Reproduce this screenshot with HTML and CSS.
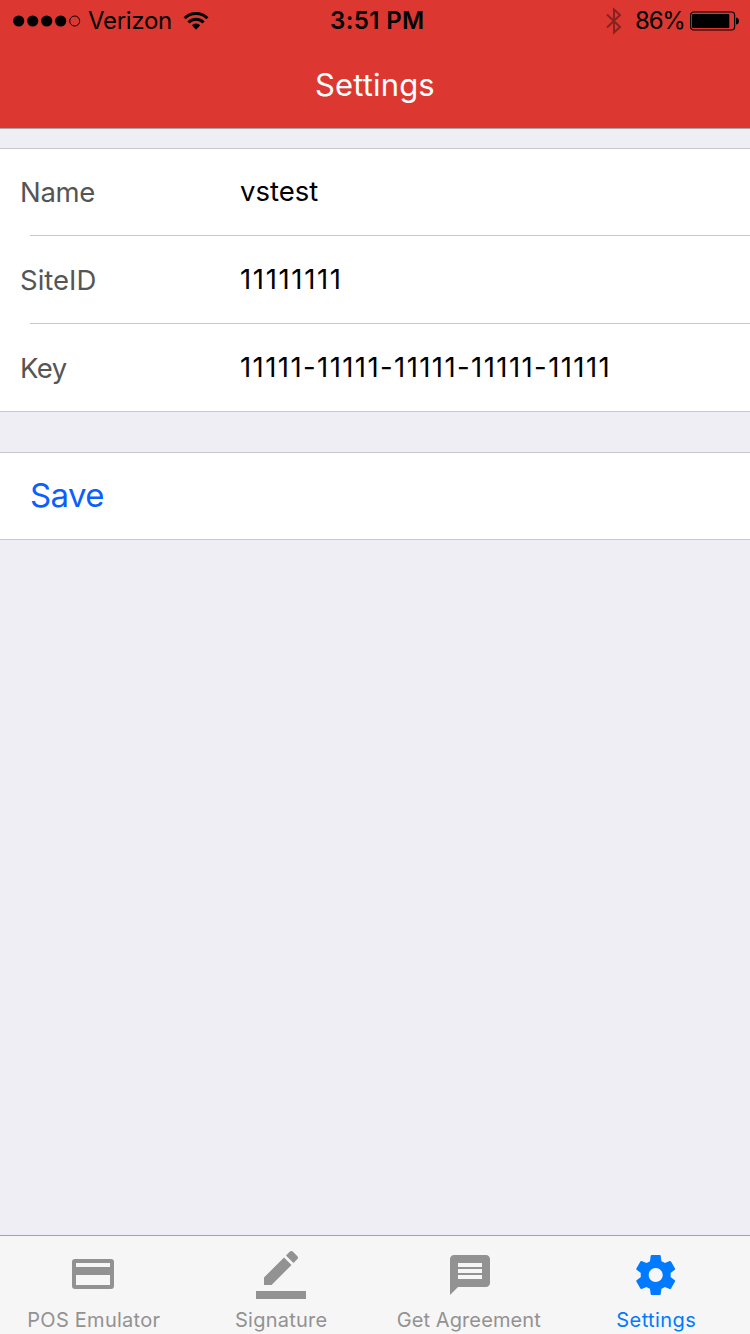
FILE: index.html
```html
<!DOCTYPE html>
<html lang="en">
<head>
<meta charset="utf-8">
<title>Settings</title>
<link rel="stylesheet" href="styles.css">
</head>
<body>
<div class="screen">
  <header class="header">
    <div class="status">
      <div class="status-left">
        <svg class="signal" width="68" height="12" viewBox="0 0 68 12"><circle cx="5.7" cy="6" r="5.6"/><circle cx="19.7" cy="6" r="5.6"/><circle cx="33.7" cy="6" r="5.6"/><circle cx="47.7" cy="6" r="5.6"/><circle cx="61.7" cy="6" r="5" fill="none" stroke="#000"/></svg>
        <span class="carrier">Verizon</span>
        <svg class="wifi" width="26" height="20" viewBox="0 0 26 20"><g fill="none" stroke="#000" stroke-width="2.9"><path d="M1.5 7.3a16.3 16.3 0 0 1 23 0"/><path d="M5.4 11.4a10.7 10.7 0 0 1 15.2 0"/></g><path d="M8.7 14.3a6.1 6.1 0 0 1 8.6 0L13 18.7z"/></svg>
      </div>
      <span class="time">3:51 PM</span>
      <div class="status-right">
        <svg class="bluetooth" width="16" height="28" viewBox="0 0 16 28"><path d="M1 7.5L14 20 8 25.5V2.5L14 8 1 20.5" fill="none" stroke="#87221f" stroke-width="2"/></svg>
        <span class="percent">86%</span>
        <svg class="battery" width="50" height="20" viewBox="0 0 50 20"><rect x=".6" y="1" width="44" height="18" rx="3" fill="none" stroke="#000" stroke-width="1.2"/><rect x="2" y="3" width="37.3" height="14" rx="1"/><path d="M46 6.4q3 .6 3 3.6t-3 3.6z"/></svg>
      </div>
    </div>
    <h1 class="title">Settings</h1>
  </header>
  <main class="content">
    <section class="group">
      <label class="row"><span class="label name">Name</span><span class="value">vstest</span></label>
      <label class="row"><span class="label">SiteID</span><span class="value site-id">11111111</span></label>
      <label class="row"><span class="label key">Key</span><span class="value site-key">11111-11111-11111-11111-11111</span></label>
    </section>
    <section class="group action"><span class="save">Save</span></section>
  </main>
  <nav class="tabs">
    <a class="tab">
      <svg class="icon" width="50" height="48" viewBox="1 0 50 48"><path fill-rule="evenodd" d="M7 8h36a3 3 0 0 1 3 3v24a3 3 0 0 1-3 3H7a3 3 0 0 1-3-3V11a3 3 0 0 1 3-3zM8 12v4h34v-4zM8 24v10h34V24z"/></svg>
      <span class="tab-label pos">POS Emulator</span>
    </a>
    <a class="tab">
      <svg class="icon" width="50" height="48" viewBox="0 0 25 24"><path d="M17.75 7L14 3.25l-10 10V17h3.75l10-10zm2.96-2.96c.39-.39.39-1.02 0-1.41L18.37.29c-.39-.39-1.02-.39-1.41 0L15 2.25 18.75 6l1.96-1.96zM0 20h25v4H0z"/></svg>
      <span class="tab-label">Signature</span>
    </a>
    <a class="tab">
      <svg class="icon" width="48" height="48" viewBox="-.5 0 24 24"><path d="M20 2H4c-1.1 0-1.99.9-1.99 2L2 22l4-4h14c1.1 0 2-.9 2-2V4c0-1.1-.9-2-2-2zm-2 12H6v-2h12v2zm0-3H6V9h12v2zm0-3H6V6h12v2z"/></svg>
      <span class="tab-label agreement">Get Agreement</span>
    </a>
    <a class="tab active">
      <svg class="icon" width="48" height="48" viewBox=".15 0 24 24"><path d="M19.43 12.98c.04-.32.07-.64.07-.98s-.03-.66-.07-.98l2.11-1.65c.19-.15.24-.42.12-.64l-2-3.46c-.12-.22-.39-.3-.61-.22l-2.49 1c-.52-.4-1.08-.73-1.69-.98l-.38-2.65C14.46 2.18 14.25 2 14 2h-4c-.25 0-.46.18-.49.42l-.38 2.65c-.61.25-1.17.59-1.69.98l-2.49-1c-.23-.09-.49 0-.61.22l-2 3.46c-.13.22-.07.49.12.64l2.11 1.65c-.04.32-.07.65-.07.98s.03.66.07.98l-2.11 1.65c-.19.15-.24.42-.12.64l2 3.46c.12.22.39.3.61.22l2.49-1c.52.4 1.08.73 1.69.98l.38 2.65c.03.24.24.42.49.42h4c.25 0 .46-.18.49-.42l.38-2.65c.61-.25 1.17-.59 1.69-.98l2.49 1c.23.09.49 0 .61-.22l2-3.46c.12-.22.07-.49-.12-.64l-2.11-1.65zM12 15.5c-1.93 0-3.5-1.57-3.5-3.5s1.57-3.5 3.5-3.5 3.5 1.57 3.5 3.5-1.57 3.5-3.5 3.5z"/></svg>
      <span class="tab-label settings">Settings</span>
    </a>
  </nav>
</div>
</body>
</html>
```
FILE: styles.css
```css
* { box-sizing: border-box; }
body { margin: 0; font-family: Inter, "Liberation Sans", sans-serif; }
.screen { width: 750px; height: 1334px; display: flex; flex-direction: column; background: #efeef4; white-space: nowrap; }
.header { height: 129px; background: #dc3831; border-bottom: 1px solid #a9a4a8; }
.status { height: 40px; display: grid; grid-template-columns: 300px 1fr 300px; align-items: center; font-size: 24px; line-height: 42px; color: #000; }
.status-left, .status-right { display: flex; align-items: center; height: 40px; }
.status-left { padding-left: 13px; }
.signal { margin-right: 7px; }
.carrier { width: 85px; letter-spacing: -.3px; }
.wifi { margin-left: 10px; }
.time { padding-left: 30px; font-weight: 600; letter-spacing: .4px; }
.status-right { padding-left: 156px; }
.percent { margin-left: 13px; width: 55px; letter-spacing: -1.2px; }
.battery { flex: none; }
.title { margin: 0; height: 88px; padding: 0 0 0 315px; font-size: 31px; line-height: 90px; font-weight: 400; letter-spacing: .15px; color: #fff; }
.content { flex: 1; padding-top: 19px; }
.group { background: #fff; border: solid #c8c7cc; border-width: 1px 0; }
.row { height: 88px; padding-left: 20px; display: grid; grid-template-columns: 220px 1fr; line-height: 89px; font-size: 27.5px; background: linear-gradient(#c8c7cc, #c8c7cc) 30px 87px / 100% 1px no-repeat; }
.row:first-child { height: 87px; line-height: 87px; background-position: 30px 86px; }
.row:last-child { height: 87px; background: none; }
.label { color: #555; }
.name { letter-spacing: -.3px; }
.key { letter-spacing: -.6px; }
.value { color: #000; line-height: 87px; }
.row:first-child .value { line-height: 85px; }
.site-id { letter-spacing: 1.65px; }
.site-key { letter-spacing: 1.41px; }
.action { height: 88px; margin-top: 40px; padding-left: 30px; line-height: 85px; font-size: 33px; letter-spacing: -.6px; color: #0a60ff; }
.tabs { height: 99px; display: grid; grid-template-columns: repeat(4, 187.5px); background: #f6f6f6; border-top: 1px solid #a4a3a9; }
.tab { padding-top: 15px; display: flex; flex-direction: column; align-items: center; color: #929292; }
.icon { fill: currentColor; }
.tab-label { margin-top: 8px; font-size: 20px; line-height: 26px; letter-spacing: .25px; }
.agreement { letter-spacing: .1px; }
.settings { letter-spacing: .4px; }
.active { color: #007aff; }
```
